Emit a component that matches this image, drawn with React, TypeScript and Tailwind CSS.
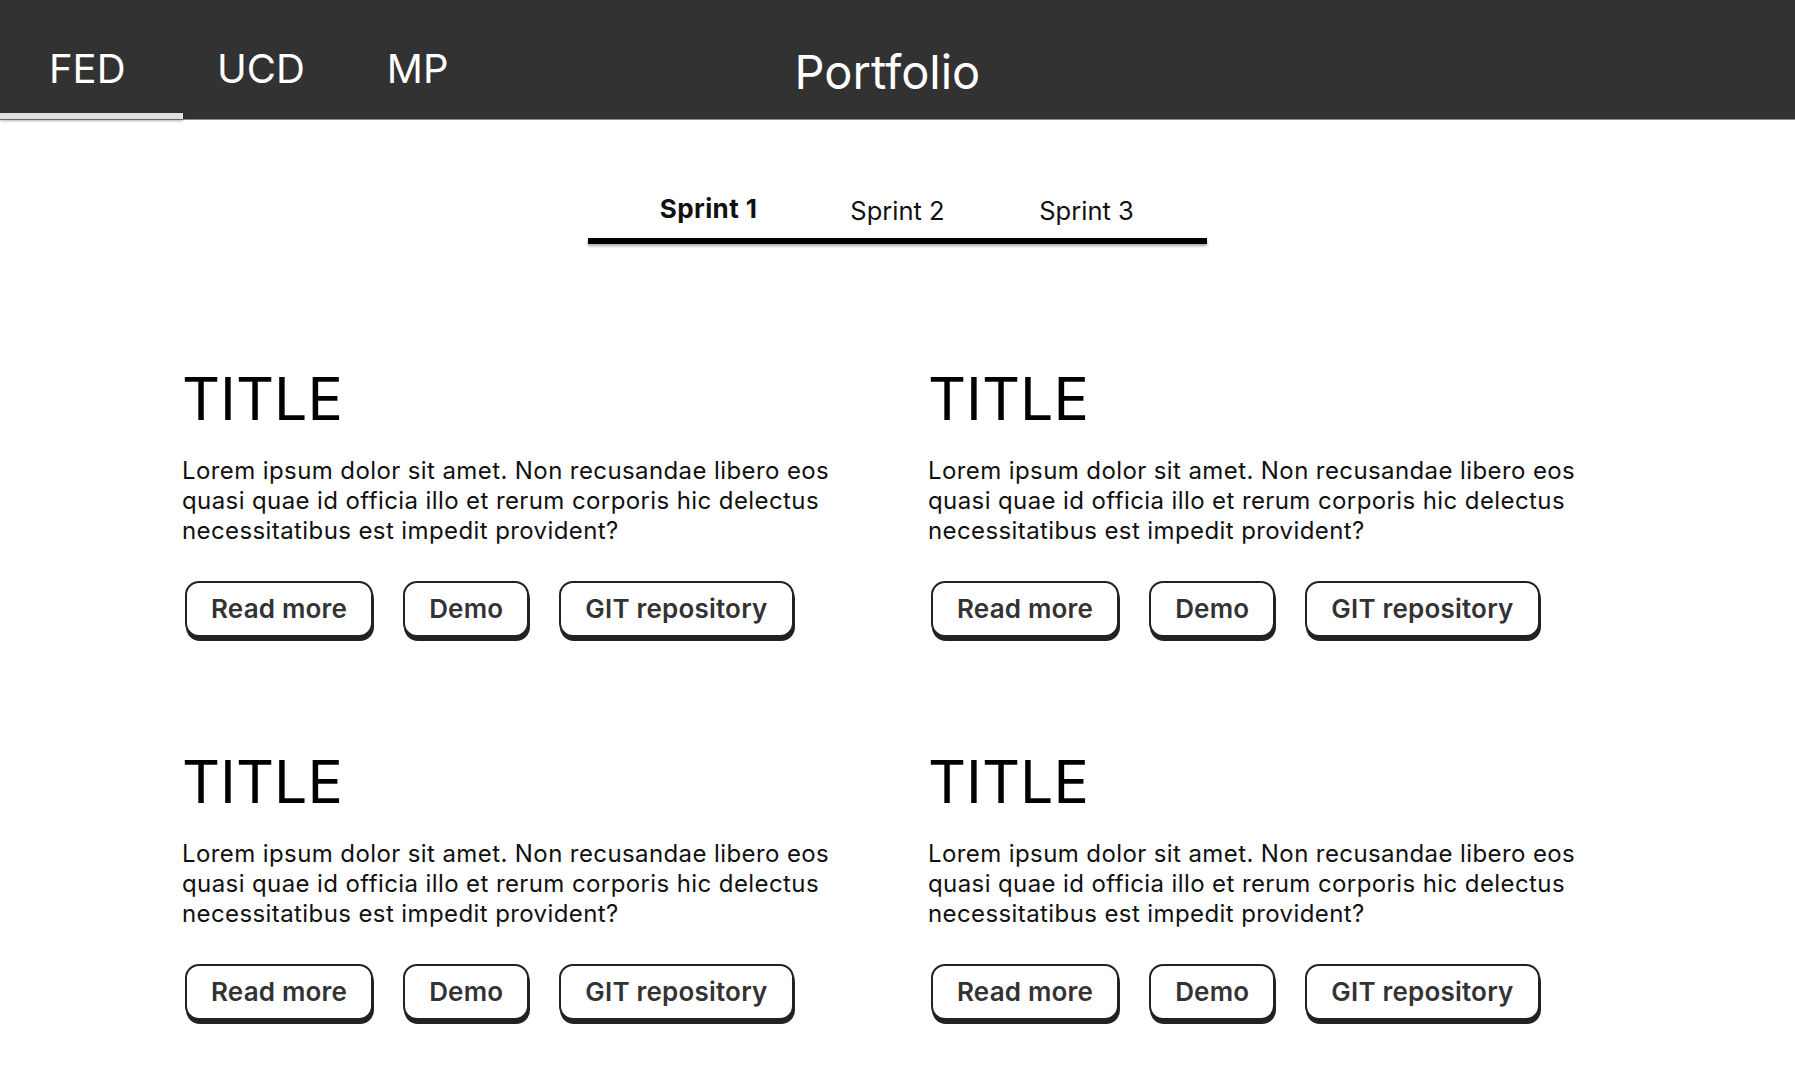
import { useState } from 'react'

//-------------------------------data---------------------------------

const courses = ['FED', 'UCD', 'MP']
const sprints = ['Sprint 1', 'Sprint 2', 'Sprint 3']

const projects = [1, 2, 3, 4].map((n) => ({
  id: n,
  title: 'TITLE',
  text: 'Lorem ipsum dolor sit amet. Non recusandae libero eos quasi quae id officia illo et rerum corporis hic delectus necessitatibus est impedit provident?',
}))

const buttons = ['Read more', 'Demo', 'GIT repository']

//-------------------------------parts---------------------------------

const Header = ({ active }: { active: string }) => {
  return (
    <header className="flex h-[120px] items-center border-b border-[#8c8c8c] bg-[#323232] text-white">
      {courses.map((c, i) => (
        <div
          key={c}
          className={
            i === 0
              ? 'relative flex h-full w-[183px] items-center pl-[49px] pt-[18px]'
              : i === 1
                ? 'ml-[34px] flex h-full items-center pt-[18px]'
                : 'ml-[82px] flex h-full items-center pt-[18px]'
          }
        >
          <span className="text-[40px] leading-none">{c}</span>
          {active === c && (
            <div className="absolute bottom-0 left-0 h-[6px] w-full bg-[#e0e0e0] shadow-[0_2px_3px_rgba(0,0,0,0.3)]"></div>
          )}
        </div>
      ))}
      <h1 className="ml-[346px] pt-[24px] text-[47px] leading-none">Portfolio</h1>
    </header>
  )
}

const SprintTabs = ({ active }: { active: string }) => {
  return (
    <div className="mx-auto w-[619px]">
      <div className="flex h-[30px] items-center px-[26px]">
        {sprints.map((s) => (
          <div
            key={s}
            className={
              s === active
                ? 'w-[189px] pb-[4px] text-center text-[26px] font-bold leading-[30px] tracking-[0.4px] text-[#111]'
                : 'w-[189px] text-center text-[25.5px] leading-[30px] text-[#111]'
            }
          >
            {s}
          </div>
        ))}
      </div>
      <div className="mt-[12px] h-[6px] w-full bg-black shadow-[0_2px_3px_rgba(0,0,0,0.35)]"></div>
    </div>
  )
}

const ProjectCard = ({ title, text }: { title: string; text: string }) => {
  return (
    <div>
      <h2 className="text-[59px] font-normal leading-none text-black">{title}</h2>
      <p className="mt-[28px] text-[24px] leading-[30px] tracking-[0.4px] text-[#111]">
        {text}
      </p>
      <div className="ml-[3px] mt-[35px] flex gap-[30px]">
        {buttons.map((b) => (
          <button
            key={b}
            type="button"
            className="h-[56px] rounded-[14px] border-2 border-[#222] bg-white px-[24px] pb-[2px] text-[26px] font-semibold tracking-[0.2px] text-[#333] shadow-[1px_4px_0_#222]"
          >
            {b}
          </button>
        ))}
      </div>
    </div>
  )
}

//------------------------------RENDER--------------------------------

export default function App() {
  const [course] = useState('FED')
  const [sprint] = useState('Sprint 1')

  return (
    <div className="min-h-screen bg-white font-['Inter',sans-serif]">
      <Header active={course} />
      <main className="pt-[76px]">
        <SprintTabs active={sprint} />
        <section className="mx-auto mt-[125px] grid w-[1431px] grid-cols-2 gap-x-[61px] gap-y-[115px]">
          {projects.map((p) => (
            <ProjectCard key={p.id} title={p.title} text={p.text} />
          ))}
        </section>
      </main>
    </div>
  )
}
